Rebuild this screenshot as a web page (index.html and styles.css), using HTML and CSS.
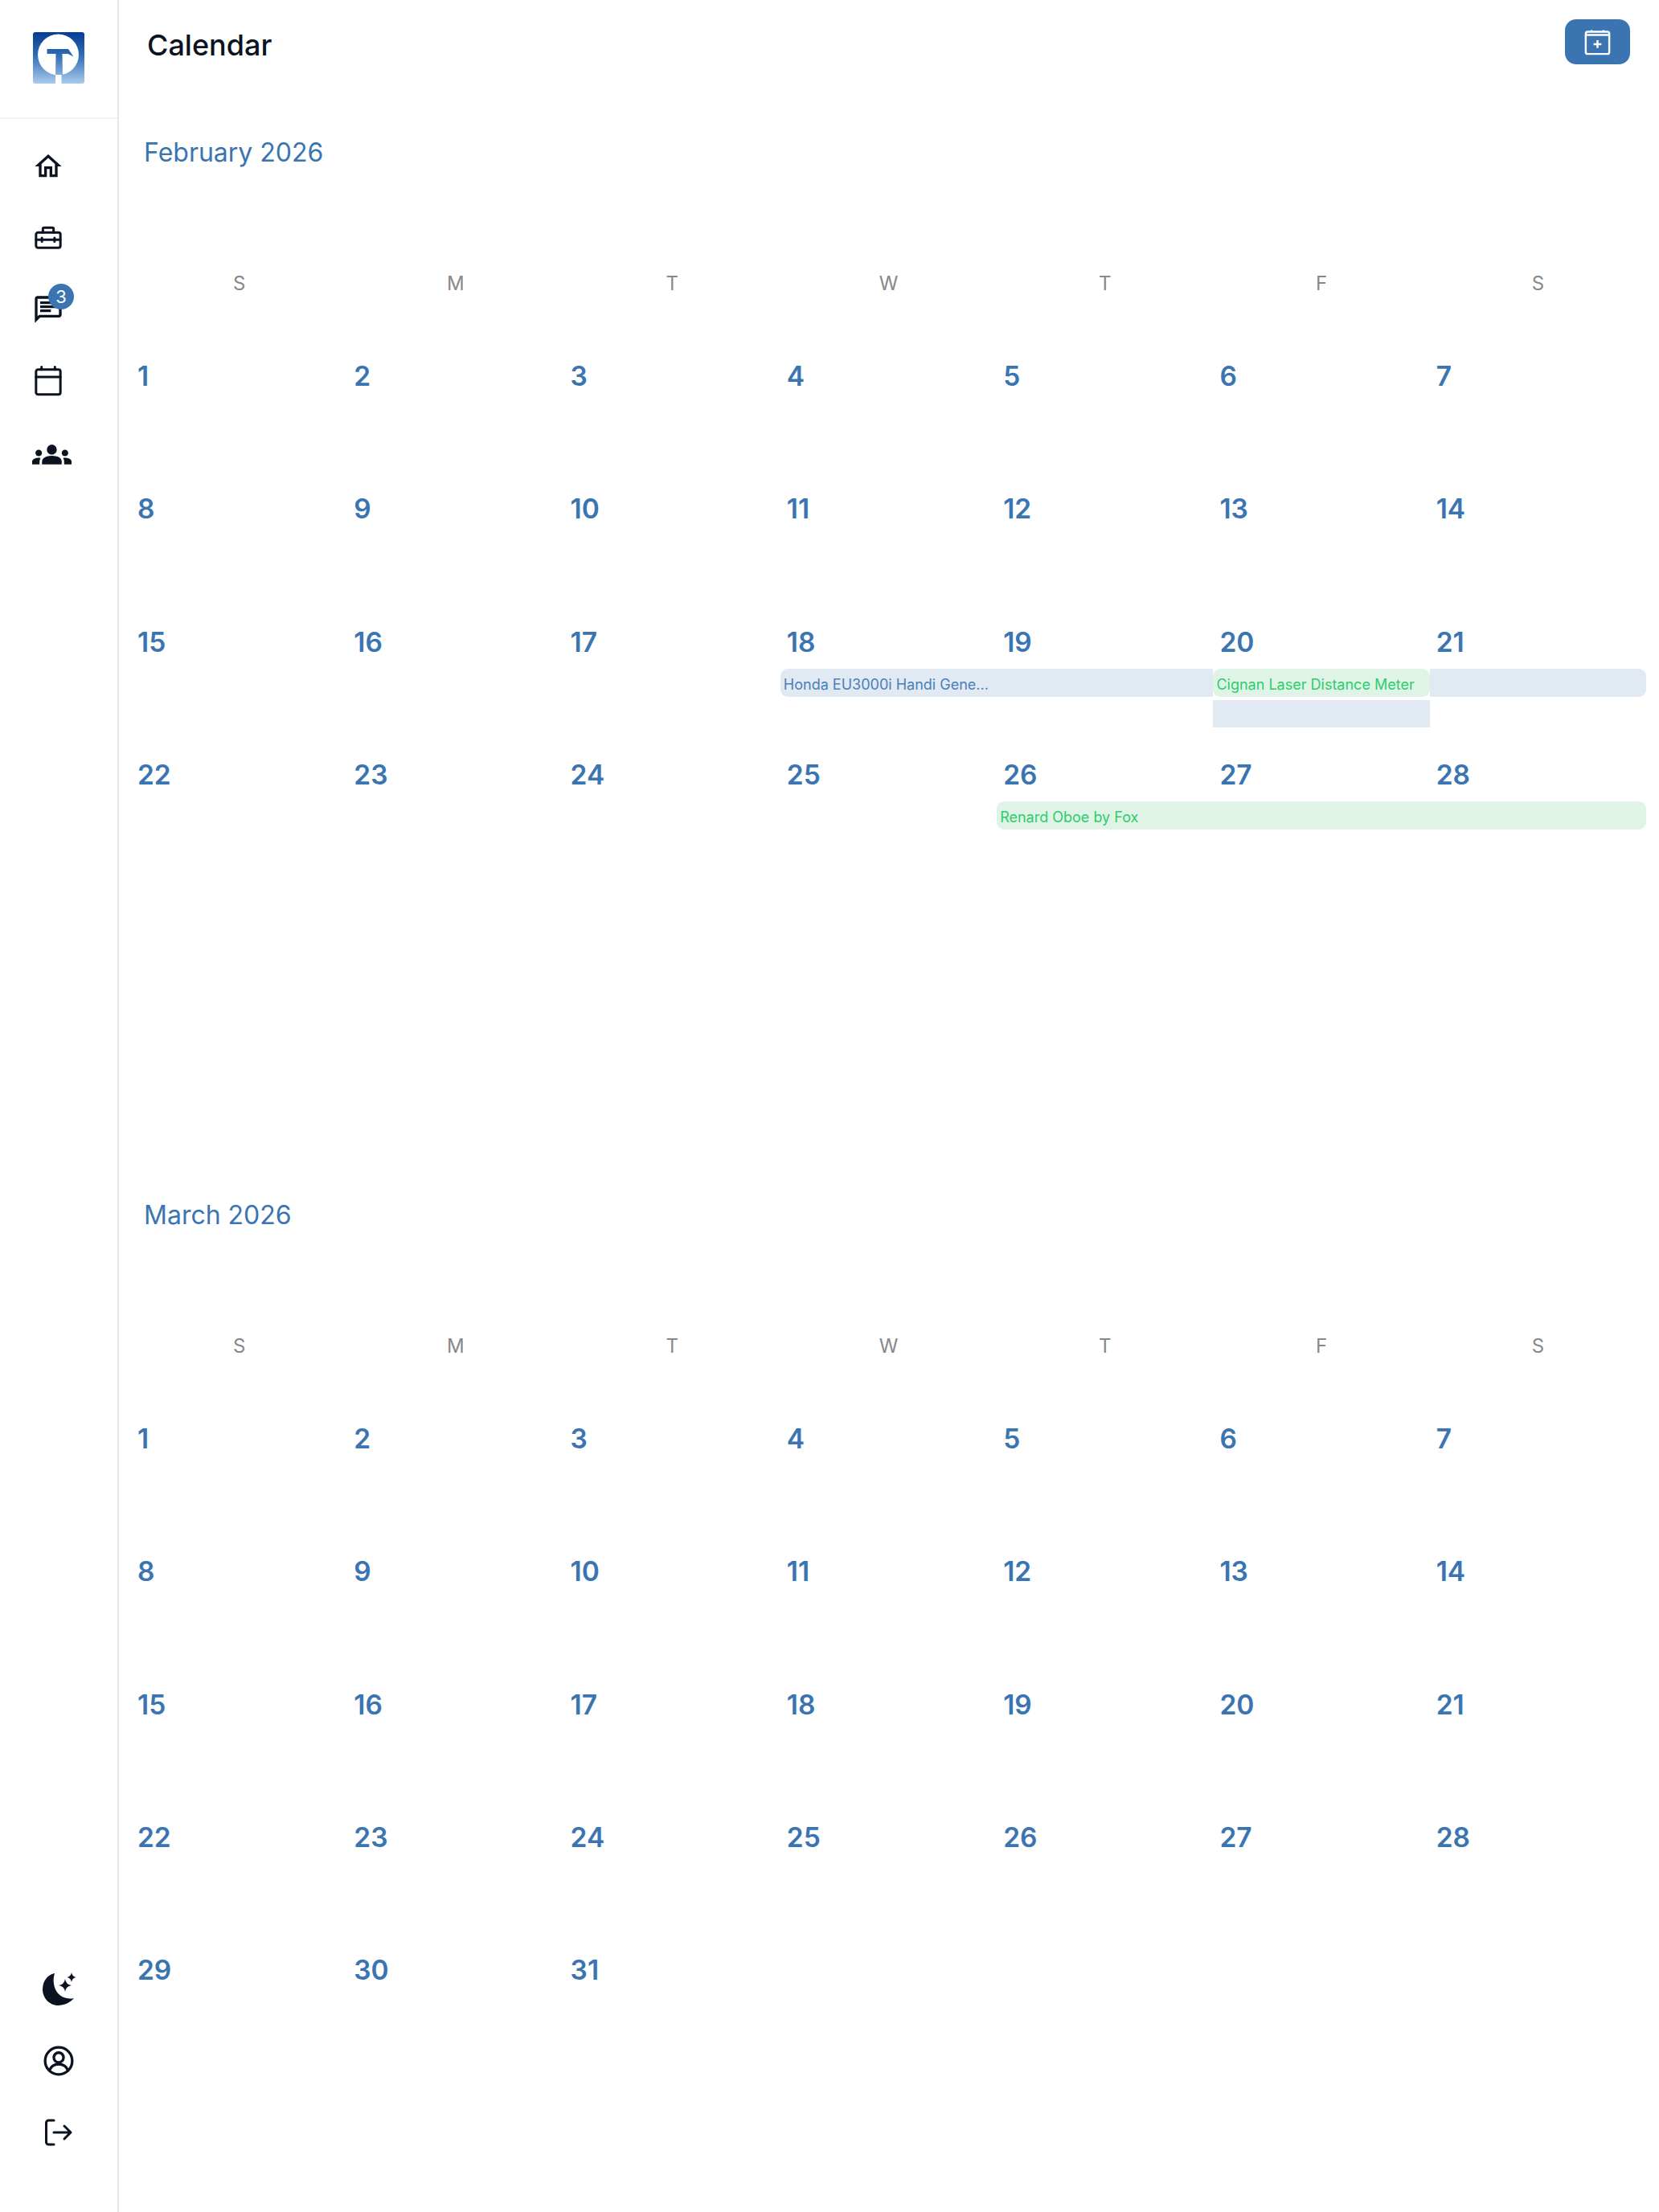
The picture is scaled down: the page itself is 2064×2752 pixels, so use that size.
FILE: index.html
```html
<!DOCTYPE html>
<html lang="en">
<head>
  <meta charset="UTF-8">
  <meta name="viewport" content="width=device-width, initial-scale=1.0">
  <title>Calendar</title>
  <link rel="stylesheet" href="styles.css">
</head>
<body>
  <aside class="sidebar">
    <div class="logo-box">
      <svg class="logo" viewBox="0 0 64 64">
        <defs>
          <linearGradient id="logoGrad" gradientUnits="userSpaceOnUse" x1="0" y1="0" x2="0" y2="64">
            <stop offset="0" stop-color="#063b92"/>
            <stop offset="0.45" stop-color="#2f6db5"/>
            <stop offset="1" stop-color="#a9cbec"/>
          </linearGradient>
        </defs>
        <rect width="64" height="64" rx="3" fill="url(#logoGrad)"/>
        <circle cx="31.5" cy="28" r="25.5" fill="#fff"/>
        <rect x="28" y="50" width="7.5" height="14" fill="#fff"/>
        <path d="M17.5 21H44l6.500 9.500-7-3.500H36.500l.5 26H28l.5-26h-11z" fill="url(#logoGrad)"/>
      </svg>
    </div>
    <nav class="nav">
      <a class="nav-item" href="#">
        <svg class="icon" viewBox="0 0 24 24"><path d="M12 5.690l5 4.500V18h-2v-6H9v6H7v-7.810l5-4.500M12 3L2 12h3v8h6v-6h2v6h6v-8h3L12 3z"/></svg>
      </a>
      <a class="nav-item" href="#">
        <svg class="icon line" viewBox="0 0 24 24">
          <rect x="2.900" y="8" width="18.200" height="11.300" rx="1.500"/>
          <path d="M8 8V5.300q0-1 1-1h6q1 0 1 1V8M3 13.300h18M7.300 12v2.700M16.700 12v2.700"/>
        </svg>
      </a>
      <a class="nav-item" href="#">
        <svg class="icon" viewBox="0 0 24 24"><path d="M4 4h16v12H5.170L4 17.170V4m0-2c-1.100 0-1.990.9-1.990 2L2 22l4-4h14c1.100 0 2-.9 2-2V4c0-1.100-.9-2-2-2H4zm2 10h8v2H6v-2zm0-3h12v2H6V9zm0-3h12v2H6V6z"/></svg>
        <span class="badge">3</span>
      </a>
      <a class="nav-item" href="#">
        <svg class="icon line" viewBox="0 0 24 24">
          <rect x="2.900" y="3.500" width="18.200" height="18.500" rx="1.500"/>
          <path d="M2.900 9h18.200M7 1.500v2M17 1.500v2"/>
        </svg>
      </a>
      <a class="nav-item nav-groups" href="#">
        <svg class="icon-wide" viewBox="0 0 24 24"><path d="M12 12.750c1.630 0 3.070.39 4.240.9 1.080.48 1.760 1.560 1.760 2.730V18H6v-1.610c0-1.180.68-2.260 1.760-2.730 1.170-.52 2.610-.91 4.240-.91zM4 13c1.100 0 2-.9 2-2s-.9-2-2-2-2 .9-2 2 .9 2 2 2zm1.130 1.100c-.37-.06-.74-.1-1.130-.1-.99 0-1.930.21-2.780.58C.48 14.900 0 15.620 0 16.430V18h4.500v-1.610c0-.83.23-1.610.63-2.290zM20 13c1.100 0 2-.9 2-2s-.9-2-2-2-2 .9-2 2 .9 2 2 2zm4 3.430c0-.81-.48-1.530-1.220-1.850-.85-.37-1.790-.58-2.780-.58-.39 0-.76.04-1.130.1.4.68.63 1.460.63 2.290V18H24v-1.570zM12 6c1.660 0 3 1.340 3 3s-1.340 3-3 3-3-1.340-3-3 1.340-3 3-3z"/></svg>
      </a>
    </nav>
    <div class="nav-bottom">
      <a class="nav-item" href="#">
        <svg class="icon-moon" viewBox="2 0 60 60">
          <path d="M27 10C17 12 12 21 12 30c0 11 9 20 19 20 8 0 16-4 20-9-9 2-18-2-22-9-4-7-4-16-2-22z"/>
          <path d="M40 17q1 7 8 8-7 1-8 8-1-7-8-8 7-1 8-8zM48 9q.8 5 5.500 6-4.700 1-5.500 6-.8-5-5.500-6 4.700-1 5.500-6z"/>
        </svg>
      </a>
      <a class="nav-item" href="#">
        <svg class="icon-user line" viewBox="0 0 24 24">
          <circle cx="12" cy="12" r="9.200"/>
          <circle cx="12" cy="9.700" r="3.300"/>
          <path d="M5.700 18.500c1-2.700 3.400-4.200 6.300-4.200s5.300 1.500 6.300 4.200"/>
        </svg>
      </a>
      <a class="nav-item" href="#">
        <svg class="icon-exit" viewBox="1 0 40 40">
          <path d="M15 5H8.500a3 3 0 0 0-3 3v24a3 3 0 0 0 3 3H15M15 20h20M28 12l8 8-8 8"/>
        </svg>
      </a>
    </div>
  </aside>

  <main class="main">
    <header class="topbar">
      <h1 class="page-title">Calendar</h1>
      <button class="add-btn">
        <svg class="add-icon" viewBox="0 0 24 24">
          <rect x="3" y="4" width="18" height="17" rx="1.500"/>
          <path d="M3 6.500h18M7.500 2.800V4M16.500 2.800V4M12 10.500v6M9 13.500h6"/>
        </svg>
      </button>
    </header>

    <section class="month">
      <h2 class="month-title">February 2026</h2>
      <div class="weekdays">
        <span>S</span><span>M</span><span>T</span><span>W</span><span>T</span><span>F</span><span>S</span>
      </div>
      <div class="weeks">
        <div class="week">
          <span class="day">1</span><span class="day">2</span><span class="day">3</span><span class="day">4</span><span class="day">5</span><span class="day">6</span><span class="day">7</span>
        </div>
        <div class="week">
          <span class="day">8</span><span class="day">9</span><span class="day">10</span><span class="day">11</span><span class="day">12</span><span class="day">13</span><span class="day">14</span>
        </div>
        <div class="week">
          <span class="day">15</span><span class="day">16</span><span class="day">17</span><span class="day">18</span><span class="day">19</span><span class="day">20</span><span class="day">21</span>
          <div class="event blue start honda-a">Honda EU3000i Handi Gene...</div>
          <div class="event green start end cignan">Cignan Laser Distance Meter</div>
          <div class="event blue honda-b"></div>
          <div class="event blue end honda-c"></div>
        </div>
        <div class="week">
          <span class="day">22</span><span class="day">23</span><span class="day">24</span><span class="day">25</span><span class="day">26</span><span class="day">27</span><span class="day">28</span>
          <div class="event green start end renard">Renard Oboe by Fox</div>
        </div>
      </div>
    </section>

    <section class="month">
      <h2 class="month-title">March 2026</h2>
      <div class="weekdays">
        <span>S</span><span>M</span><span>T</span><span>W</span><span>T</span><span>F</span><span>S</span>
      </div>
      <div class="weeks">
        <div class="week">
          <span class="day">1</span><span class="day">2</span><span class="day">3</span><span class="day">4</span><span class="day">5</span><span class="day">6</span><span class="day">7</span>
        </div>
        <div class="week">
          <span class="day">8</span><span class="day">9</span><span class="day">10</span><span class="day">11</span><span class="day">12</span><span class="day">13</span><span class="day">14</span>
        </div>
        <div class="week">
          <span class="day">15</span><span class="day">16</span><span class="day">17</span><span class="day">18</span><span class="day">19</span><span class="day">20</span><span class="day">21</span>
        </div>
        <div class="week">
          <span class="day">22</span><span class="day">23</span><span class="day">24</span><span class="day">25</span><span class="day">26</span><span class="day">27</span><span class="day">28</span>
        </div>
        <div class="week">
          <span class="day">29</span><span class="day">30</span><span class="day">31</span>
        </div>
      </div>
    </section>
  </main>
</body>
</html>
```

FILE: styles.css
```css
* { box-sizing: border-box; }
body {
  margin: 0;
  display: flex;
  height: 100vh;
  overflow: hidden;
  background: #fff;
  color: #0b1220;
  font-family: Inter, "Noto Sans", sans-serif;
}

/* sidebar */
.sidebar {
  width: 148px;
  flex: none;
  display: flex;
  flex-direction: column;
  border-right: 2px solid #e2e8f0;
}
.logo-box {
  height: 148px;
  flex: none;
  padding: 40px 0 0 41px;
  border-bottom: 2px solid #f1f5f9;
}
.logo { display: block; width: 64px; height: 64px; }
.nav { padding: 14px 0 0 40px; }
.nav-item {
  position: relative;
  display: flex;
  align-items: center;
  height: 89px;
  color: #0b1220;
}
.nav-groups { padding-top: 6px; }
.nav-bottom {
  margin-top: auto;
  padding-bottom: 55px;
}
.nav-bottom .nav-item { justify-content: center; }
.icon, .icon-wide, .icon-moon, .icon-user, .icon-exit { display: block; fill: #0b1220; flex: none; }
.icon { width: 40px; height: 40px; }
.icon-wide { width: 49px; height: 49px; }
.icon-moon { width: 60px; height: 60px; }
.icon-user { width: 44px; height: 44px; }
.icon-exit {
  width: 40px;
  height: 40px;
  fill: none;
  stroke: #0b1220;
  stroke-width: 3;
  stroke-linecap: round;
  stroke-linejoin: round;
}
.line {
  fill: none;
  stroke: #0b1220;
  stroke-width: 1.800;
  stroke-linecap: round;
}
.badge {
  position: absolute;
  left: 20px;
  top: 13px;
  width: 32px;
  height: 32px;
  border-radius: 50%;
  background: #3a75b2;
  color: #fff;
  font-size: 22px;
  line-height: 32px;
  text-align: center;
}

/* top */
.main { flex: 1; min-width: 0; }
.topbar {
  height: 112px;
  display: flex;
  justify-content: space-between;
  align-items: flex-start;
  padding: 24px 36px 0 35px;
}
.page-title {
  margin: 10px 0 0;
  font-size: 36px;
  line-height: 44px;
  font-weight: 500;
}
.add-btn {
  width: 81px;
  height: 56px;
  padding: 0;
  border: none;
  border-radius: 14px;
  background: #3a75b2;
  display: flex;
  align-items: center;
  justify-content: center;
  cursor: pointer;
}
.add-icon {
  width: 39px;
  height: 39px;
  fill: none;
  stroke: #fff;
  stroke-width: 1.500;
}

/* months */
.month {
  padding: 58px 16px 30px 15px;
}
.month-title {
  margin: 0 0 102px 16px;
  font-size: 32px;
  line-height: 40px;
  font-weight: 400;
  color: #3a75b2;
}
.weekdays {
  display: grid;
  grid-template-columns: repeat(7, 1fr);
  height: 80px;
  margin-bottom: 20px;
  font-size: 24px;
  line-height: 81px;
  text-align: center;
  color: #888;
}
.weeks { min-height: 992px; }
.week {
  display: grid;
  grid-template-columns: repeat(7, 1fr);
  grid-template-rows: 85px 35px 34px;
  row-gap: 4px;
  height: 165.300px;
}
.day {
  padding: 36px 0 0 8px;
  font-size: 33.500px;
  line-height: 40px;
  font-weight: 600;
  color: #3a75b2;
}

/* event bars */
.event {
  padding-left: 4px;
  font-size: 18px;
  line-height: 39px;
  white-space: nowrap;
  overflow: hidden;
}
.event.blue { background: #e1e9f2; color: #4a80ba; }
.event.green { background: #dff4e7; color: #2ecc6b; }
.event.start { border-top-left-radius: 9px; border-bottom-left-radius: 9px; }
.event.end { border-top-right-radius: 9px; border-bottom-right-radius: 9px; }
.honda-a { grid-row: 2; grid-column: 4 / span 2; }
.honda-b { grid-row: 3; grid-column: 6; }
.honda-c { grid-row: 2; grid-column: 7; }
.cignan { grid-row: 2; grid-column: 6; }
.renard { grid-row: 2; grid-column: 5 / span 3; }
```
